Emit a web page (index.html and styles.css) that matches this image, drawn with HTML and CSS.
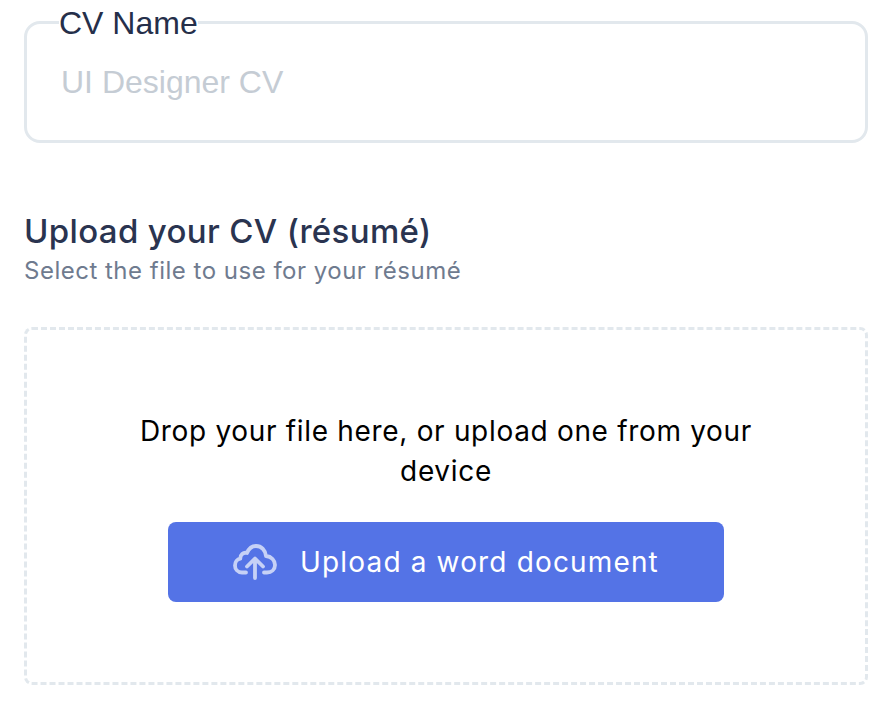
FILE: index.html
```html
<!DOCTYPE html>
<html lang="en">
<head>
<meta charset="utf-8">
<title>Upload CV</title>
<link rel="stylesheet" href="styles.css">
</head>
<body>
<main class="page">
  <fieldset class="field">
    <legend class="field-label">CV Name</legend>
    <input class="field-input" type="text" placeholder="UI Designer CV">
  </fieldset>
  <section class="upload">
    <h2 class="upload-title">Upload your CV (résumé)</h2>
    <p class="upload-sub">Select the file to use for your résumé</p>
    <div class="dropzone">
      <p class="drop-text">Drop your file here, or upload one from your device</p>
      <button class="upload-btn" type="button">
        <svg class="cloud" viewBox="0 0 44 36" width="44" height="36" fill="none" stroke="#c6d1f6" stroke-width="3.8" stroke-linecap="round" stroke-linejoin="round">
          <path d="M13 28.500H9C4.500 28.500 2 25 2 21.500C2 18 4.200 15.200 7.300 14.600C7.200 10.800 10.200 8 14 9C15.800 4.500 19 2 23 2C28.500 2 32.500 6.200 33 12C38.500 12.500 42 16.500 42 21C42 25.500 38.500 28.500 34 28.500H31"/>
          <path d="M22 34V15M14 22.500L22 14.500L30 22.500"/>
        </svg>
        <span>Upload a word document</span>
      </button>
    </div>
  </section>
</main>
</body>
</html>
```
FILE: styles.css
```css
* { box-sizing: border-box; }
html, body { margin: 0; background: #fff; }
.page { padding: 4px 23px 0 24px; }
.field {
  margin: 0;
  padding: 0 34px;
  height: 139px;
  border: 3px solid #e2e8ed;
  border-radius: 16px;
}
.field-label {
  margin-left: -2px;
  padding: 1px 0 0;
  font: 32px/36px "Liberation Sans", Arial, sans-serif;
  color: #252f4a;
}
.field-input {
  display: block;
  width: 100%;
  margin-top: 21px;
  padding: 0;
  border: 0;
  outline: 0;
  background: transparent;
  font: 32px/40px "Liberation Sans", Arial, sans-serif;
  color: #252f4a;
}
.field-input::placeholder { color: #c5ccd4; opacity: 1; }
.upload { margin-top: 66px; }
.upload-title {
  margin: 0;
  font: 500 33px/44px Inter, sans-serif;
  letter-spacing: 0.35px;
  color: #2a3450;
}
.upload-sub {
  margin: 3px 0 0;
  font: 400 24px/30px Inter, sans-serif;
  letter-spacing: 0.5px;
  color: #6f7b8f;
}
.dropzone {
  display: flex;
  flex-direction: column;
  align-items: center;
  margin-top: 41px;
  height: 358px;
  padding: 81px 0 0;
  border: 3px dashed #e2e8ed;
  border-radius: 8px;
}
.drop-text {
  margin: 0;
  width: 640px;
  font: 400 28px/40px Inter, sans-serif;
  letter-spacing: 0.68px;
  text-align: center;
  color: #000;
}
.upload-btn {
  display: flex;
  align-items: center;
  justify-content: center;
  gap: 23px;
  width: 556px;
  height: 80px;
  margin-top: 31px;
  border: 0;
  border-radius: 8px;
  background: #5473e6;
  color: #fff;
  font: 400 28px/40px Inter, sans-serif;
  letter-spacing: 1.15px;
}
.cloud { flex: none; }
```
